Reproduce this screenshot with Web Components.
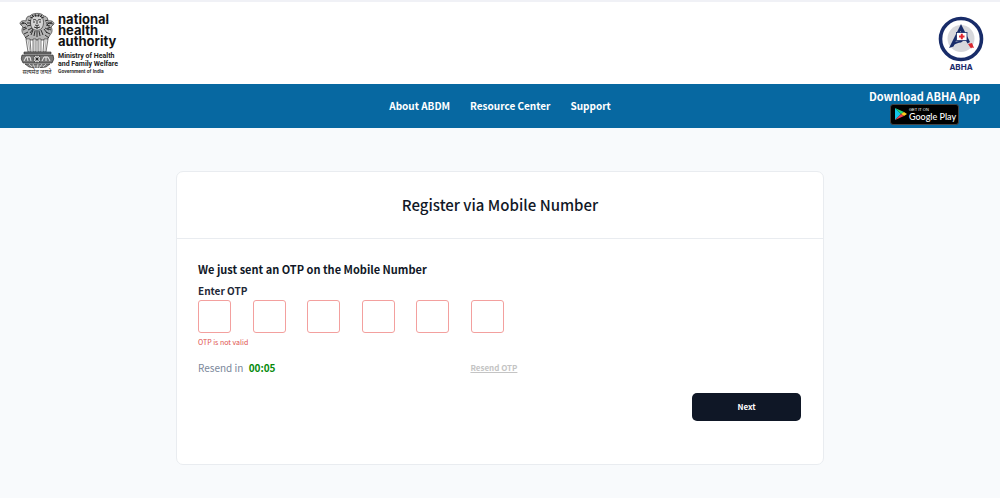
<!DOCTYPE html>
<html lang="en">
<head>
<meta charset="utf-8">
<meta name="viewport" content="width=device-width, initial-scale=1">
<title>ABHA - Register via Mobile Number</title>
<style>
  html, body { margin: 0; min-height: 100%; }
  body {
    background: #f8fafc;
    color: #111827;
    font-family: "Noto Sans CJK SC", "Noto Sans", sans-serif;
  }
</style>
</head>
<body>
<abha-page></abha-page>

<script>
const define = (name, html, setup) => {
  const template = document.createElement('template');
  template.innerHTML = html;
  customElements.define(name, class extends HTMLElement {
    constructor() {
      super();
      this.attachShadow({ mode: 'open' }).append(template.content.cloneNode(true));
      if (setup) setup(this.shadowRoot);
    }
  });
};

define('ashoka-emblem', `
<style>
  :host { display: flex; flex-direction: column; align-items: center; width: 36px; color: #222; }
  svg { display: block; width: 36px; height: 56px; }
  span { font-size: 6px; line-height: 8px; white-space: nowrap; }
</style>
<svg viewBox="0 0 36 56" fill="none" stroke="#222" stroke-width=".6" role="img" aria-label="State Emblem of India">
  <path fill="#b4b4b4" d="M11 4C13 1 22 0 25 4c3 0 4 3 4 5 4-1 6 1 6 3l-3 3c2 3 1 6-1 8l-3 5H8l-3-5c-2-2-3-5-1-8l-3-3c0-3 3-4 6-3 0-3 1-5 4-5z"/>
  <path fill="#d4d4d4" d="M13 5c2-2 8-2 10 0 2 3 2 8 0 11-2 3-8 3-10 0-2-3-2-8 0-11z"/>
  <path d="M14 8q2-1 3 0m2 0q2-1 3 0M18 8v4m-2 1q2 1 4 0m-5 2q3 2 6 0m-3-1v3M14 10h2m4 0h2" stroke-width=".9"/>
  <path d="M11 5l3 1m-1-3l2 2m1-3l1 3m3-3l-1 3m4-2l-2 2m4 0l-3 1M9 8l3 1m-4 2l4 0m-4 3l4-1m-3 5l4-2m-2 5l3-4m15-9l-3 1m5 2h-4m4 3l-4-1m3 5l-4-2m2 5l-3-4M14 18l-2 5m4-4l-1 5m3-5v6m2-6l1 5m1-6l2 5" stroke-width=".9"/>
  <path d="M2 12l4-1 2 2m-4 3l3-1M8 16l-4 2m5 2l-4 2m5 1l-4 3M34 12l-4-1-2 2m4 3l-3-1m-1 1l4 2m-5 2l4 2m-5 1l4 3M3 10l2 1m28-1l-2 1" stroke-width=".9"/>
  <path fill="#eee" d="M7 27l2 13h3l-1-13zm7 0v13h3V27zm5 0v13h3V27zm6 0l-1 13h3l2-13z"/>
  <path d="M9 28l2 11m4-11v11m5-11v11m7-11l-1 11" stroke="#999" stroke-width=".7"/>
  <path fill="#777" d="M5 40h27v2H5z"/>
  <path fill="#777" d="M3 43h31q2 4-1 8H4q-3-4-1-8z"/>
  <circle cx="18" cy="47" r="3.8" fill="#eee"/>
  <circle cx="18" cy="47" r="1" fill="#222"/>
  <path d="M18 43v8m-4-4h8m-7-3l6 6m0-6l-6 6" stroke-width=".5"/>
  <path d="M5 49l2-4h4l1 4m-4-4l1 4M23 49l2-4h4l2 4m-4-4v4" stroke="#eee" stroke-width="1"/>
  <path fill="#888" d="M6 52h25l-4 3q-9 2-17 0z"/>
  <path d="M10 52l3 3m1-3l2 4m3-4l-1 4m5-4l-3 4m7-4l-3 3" stroke="#eee" stroke-width=".7"/>
</svg>
<span lang="sa">सत्यमेव जयते</span>
`);

define('nha-logo', `
<style>
  :host { display: flex; gap: 3px; }
  .name { color: #111; font-family: Inter, sans-serif; font-weight: 700; font-size: 13px; line-height: 11px; padding-top: 2px; }
  .ministry { font-family: Roboto, sans-serif; font-weight: 700; font-size: 7px; line-height: 8px; margin-top: 5px; color: #222; }
  .gov { font-family: Roboto, sans-serif; font-weight: 700; font-size: 5px; line-height: 7px; color: #333; }
  div { white-space: nowrap; }
</style>
<ashoka-emblem></ashoka-emblem>
<div>
  <div class="name">national<br>health<br>authority</div>
  <div class="ministry">Ministry of Health<br>and Family Welfare</div>
  <div class="gov">Government of India</div>
</div>
`);

define('abha-logo', `
<style>
  :host { display: flex; flex-direction: column; align-items: center; }
  svg { display: block; width: 46px; height: 46px; }
  span { font-family: Inter, sans-serif; font-size: 8px; line-height: 10px; font-weight: 700; color: #1b2b6b; }
</style>
<svg viewBox="0 0 46 46" aria-hidden="true">
  <circle cx="23" cy="23" r="20.500" fill="#fff" stroke="#182c69" stroke-width="3.600"/>
  <circle cx="23" cy="22.500" r="13.500" fill="#d7d8dc"/>
  <path d="M23 8l9 18-2.500 1.500L22.500 15l-7 15.500L11 32z" fill="#182c69"/>
  <path d="M14 28q5-4 11-3l-2 1.500q-4 0-9 3.500z" fill="#182c69"/>
  <rect x="18.500" y="16.500" width="10.500" height="8" fill="#fff" stroke="#182c69" stroke-width=".8"/>
  <path d="M22.800 17.800h2v1.700h1.700v2h-1.700v1.700h-2v-1.700h-1.700v-2h1.700z" fill="#e3262e"/>
  <path d="M30 28l4-1 2 5-2-.5-1 1z" fill="#d92730"/>
</svg>
<span>ABHA</span>
`);

define('site-header', `
<style>
  :host { display: block; background: #fff; border-top: 2px solid #f0f1f6; }
  header { display: flex; justify-content: space-between; align-items: flex-start; padding: 10px 16px 8px 19px; }
  nha-logo { height: 64px; }
  abha-logo { margin-top: 4px; }
</style>
<header><nha-logo></nha-logo><abha-logo></abha-logo></header>
`);

define('play-badge', `
<style>
  :host { display: block; }
  a { box-sizing: border-box; display: flex; align-items: center; gap: 2px; width: 69px; height: 21px; padding: 0 3px; background: #000; border: 1px solid #444; border-radius: 3px; color: #fff; text-decoration: none; white-space: nowrap; }
  svg { width: 13px; height: 14px; flex: none; }
  small { display: block; font: 4px/5px "Liberation Sans", sans-serif; }
  b { display: block; font: 500 9px/10px Lato, sans-serif; }
</style>
<a href="#play"><svg viewBox="0 0 13 14" aria-hidden="true">
  <path d="M1 1v12l6-6z" fill="#13c4e8"/><path d="M1 1l9 4-3 2z" fill="#22d47b"/>
  <path d="M10 5l3 2-3 2-3-2z" fill="#ffcf1b"/><path d="M7 7l3 2-9 4z" fill="#f2404e"/>
</svg><span><small>GET IT ON</small><b>Google Play</b></span></a>
`);

define('site-nav', `
<style>
  :host { display: block; background: #0768a1; color: #fff; }
  nav { display: grid; grid-template-columns: 1fr auto 1fr; align-items: center; height: 44px; padding: 0 20px; }
  ul { grid-column: 2; display: flex; gap: 20px; margin: 0; padding: 0 0 1px; list-style: none; }
  li { display: flex; }
  ul a { color: inherit; text-decoration: none; font-weight: 700; font-size: 10px; line-height: 16px; }
  .app { justify-self: end; display: flex; flex-direction: column; align-items: center; white-space: nowrap; }
  .app > span { font-weight: 700; font-size: 11px; line-height: 16px; }
</style>
<nav>
  <ul>
    <li><a href="#about">About ABDM</a></li>
    <li><a href="#resources">Resource Center</a></li>
    <li><a href="#support">Support</a></li>
  </ul>
  <div class="app"><span>Download ABHA App</span><play-badge></play-badge></div>
</nav>
`);

define('panel-card', `
<style>
  :host { box-sizing: border-box; display: block; background: #fff; border: 1px solid #e9ecf0; border-radius: 7px; }
  header { padding: 22px; border-bottom: 1px solid #e9ecf0; text-align: center; }
  .body { padding: 20px 22px 43px 21px; }
</style>
<header><slot name="title"></slot></header>
<div class="body"><slot></slot></div>
`);

define('otp-input', `
<style>
  :host { display: block; }
  fieldset { border: 0; margin: 0; padding: 0; min-width: 0; }
  legend { padding: 0; font-weight: 700; font-size: 10px; line-height: 16px; color: #1f2937; }
  .boxes { display: flex; justify-content: space-between; max-width: 306px; margin-top: 1px; }
  input { box-sizing: border-box; width: 33px; height: 33px; margin: 0; padding: 0; border: 1px solid #f3a09e; border-radius: 3px; background: #fff; font: inherit; text-align: center; outline: none; }
  p { margin: 2px 0 0; font-size: 7px; line-height: 14px; color: #e0524e; }
</style>
<fieldset aria-describedby="error">
  <legend>Enter OTP</legend>
  <div class="boxes"></div>
  <p id="error">OTP is not valid</p>
</fieldset>
`, root => {
  const boxes = root.querySelector('.boxes');
  for (let i = 1; i <= 6; i++) {
    const input = document.createElement('input');
    input.type = 'text';
    input.inputMode = 'numeric';
    input.maxLength = 1;
    input.setAttribute('aria-label', 'OTP digit ' + i);
    input.setAttribute('aria-invalid', 'true');
    boxes.append(input);
  }
});

define('action-button', `
<style>
  :host { display: block; }
  button { width: 109px; height: 28px; padding: 0; border: 0; border-radius: 5px; background: #0f1726; color: #fff; font-family: inherit; font-weight: 700; font-size: 8px; line-height: 16px; }
</style>
<button type="button"><slot></slot></button>
`);

define('otp-form', `
<style>
  :host { display: block; }
  form { margin: 0; }
  h2 { margin: 0 0 4px; font-weight: 700; font-size: 11px; line-height: 20px; }
  .resend { display: grid; grid-template-columns: 9fr 11fr; gap: 2px; align-items: center; margin-top: 11px; font-size: 10px; line-height: 16px; color: #7b879b; }
  .resend b { margin-left: 3px; color: #078a0b; }
  .resend a { font-size: 8px; color: #c4c4c4; font-weight: 700; }
  .actions { display: flex; justify-content: flex-end; margin-top: 15px; }
</style>
<form>
  <h2>We just sent an OTP on the Mobile Number</h2>
  <otp-input></otp-input>
  <div class="resend"><span>Resend in <b>00:05</b></span><a href="#resend">Resend OTP</a></div>
  <div class="actions"><action-button>Next</action-button></div>
</form>
`);

define('abha-page', `
<style>
  :host { display: block; }
  main { padding: 43px 16px 33px; }
  panel-card { max-width: 648px; margin: 0 auto; }
  h1 { margin: 0; font-weight: 500; font-size: 15px; line-height: 22px; }
</style>
<site-header></site-header>
<site-nav></site-nav>
<main>
  <panel-card>
    <h1 slot="title">Register via Mobile Number</h1>
    <otp-form></otp-form>
  </panel-card>
</main>
`);
</script>
</body>
</html>
